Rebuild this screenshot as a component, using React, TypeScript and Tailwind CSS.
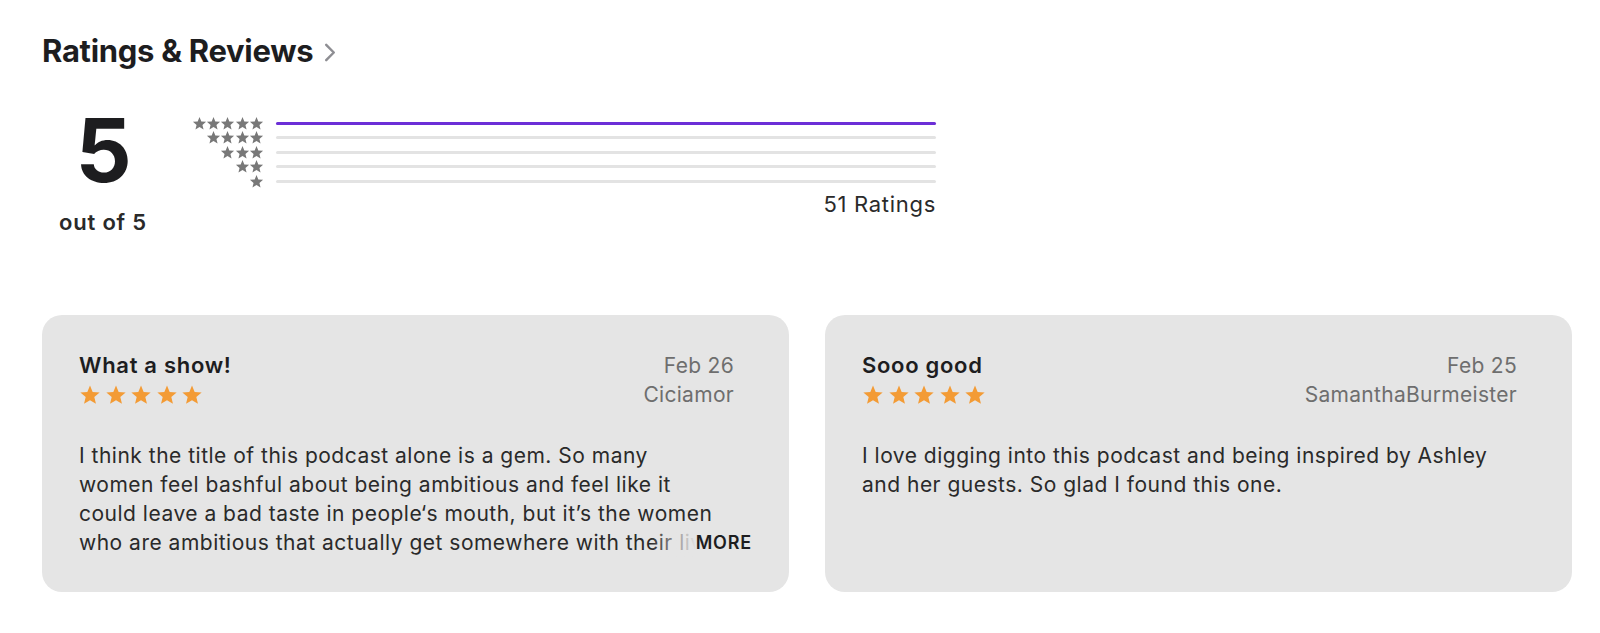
import React from 'react';

const STAR = '12,1.5 14.9,8.6 22.5,9.2 16.7,14.2 18.5,21.6 12,17.6 5.5,21.6 7.3,14.2 1.5,9.2 9.1,8.6';

const Star: React.FC<{ className: string }> = ({ className }) => (
  <svg viewBox="0 0 24 24" className={className} fill="currentColor">
    <polygon points={STAR} />
  </svg>
);

const reviews = [
  {
    title: 'What a show!',
    date: 'Feb 26',
    author: 'Ciciamor',
    body: "I think the title of this podcast alone is a gem. So many\nwomen feel bashful about being ambitious and feel like it\ncould leave a bad taste in people‘s mouth, but it’s the women\nwho are ambitious that actually get somewhere with their lives and careers, and this show celebrates them.",
    more: true,
  },
  {
    title: 'Sooo good',
    date: 'Feb 25',
    author: 'SamanthaBurmeister',
    body: 'I love digging into this podcast and being inspired by Ashley\nand her guests. So glad I found this one.',
    more: false,
  },
];

const bars = [100, 0, 0, 0, 0];

export default function App() {
  return (
    <div
      className="min-h-[633px] bg-white px-[42px] pt-[33px] text-[#1d1d1f]"
      style={{ fontFamily: 'Inter, "Liberation Sans", sans-serif' }}
    >
      <div className="flex items-center gap-[11px] h-[36px]">
        <h2 className="text-[31px] font-bold tracking-[-0.3px] leading-[36px]">Ratings &amp; Reviews</h2>
        <svg viewBox="0 0 12 20" className="w-[12px] h-[19px] mt-[3px] text-[#8e8e93]" fill="none" stroke="currentColor" strokeWidth="2.6" strokeLinecap="round" strokeLinejoin="round">
          <polyline points="2,2 10,10 2,18" />
        </svg>
      </div>

      <div className="mt-[37px] flex items-start">
        <div className="w-[122px] flex flex-col items-center">
          <div className="text-[88px] leading-[88px] font-bold tracking-[-1px]">5</div>
          <div className="mt-[15px] text-[22px] leading-[26px] font-semibold tracking-[0.8px] text-[#2a2a2a]">out of 5</div>
        </div>

        <div className="ml-[28px] mt-[10px] w-[744px]">
          <div className="flex flex-col">
            {bars.map((pct, i) => (
              <div key={i} className="flex items-center h-[14.5px]">
                <div className="w-[72px] flex justify-end">
                  {Array.from({ length: 5 - i }).map((_, j) => (
                    <Star key={j} className="w-[15px] h-[15px] -mx-[0.3px] text-[#787878]" />
                  ))}
                </div>
                <div className="ml-[12px] flex-1 h-[3px] rounded-full bg-[#e3e3e3]">
                  <div className="h-full rounded-full bg-[#6c2fd7]" style={{ width: `${pct}%` }} />
                </div>
              </div>
            ))}
          </div>
          <div className="mt-[2px] text-right text-[22px] leading-[26px] tracking-[0.7px] text-[#2a2a2a]">51 Ratings</div>
        </div>
      </div>

      <div className="mt-[80px] grid grid-cols-2 gap-[36px] w-[1530px]">
        {reviews.map((r) => (
          <div key={r.title} className="h-[277px] rounded-[20px] bg-[#e5e5e5] px-[37px] pt-[36px]">
            <div className="flex justify-between pr-[18px]">
              <div>
                <div className="text-[22px] leading-[28px] font-semibold tracking-[0.7px]">{r.title}</div>
                <div className="mt-[5px] flex gap-[3.5px]">
                  {Array.from({ length: 5 }).map((_, j) => (
                    <Star key={j} className="w-[22px] h-[22px] text-[#f39b35]" />
                  ))}
                </div>
              </div>
              <div className="text-right text-[21px] leading-[29px] tracking-[0.3px] text-[#6e6e6e]">
                <div>{r.date}</div>
                <div>{r.author}</div>
              </div>
            </div>
            <div className="relative mt-[32px]">
              <p className="line-clamp-4 whitespace-pre-line text-[21px] leading-[29px] tracking-[0.5px] text-[#2a2a2a]">{r.body}</p>
              {r.more && (
                <div className="absolute bottom-0 right-0 flex h-[29px] items-center">
                  <div className="h-full w-[46px] bg-gradient-to-r from-transparent to-[#e5e5e5]" />
                  <span className="h-full bg-[#e5e5e5] text-[18px] leading-[29px] font-semibold tracking-[0.8px] text-[#1d1d1f]">MORE</span>
                </div>
              )}
            </div>
          </div>
        ))}
      </div>
    </div>
  );
}
